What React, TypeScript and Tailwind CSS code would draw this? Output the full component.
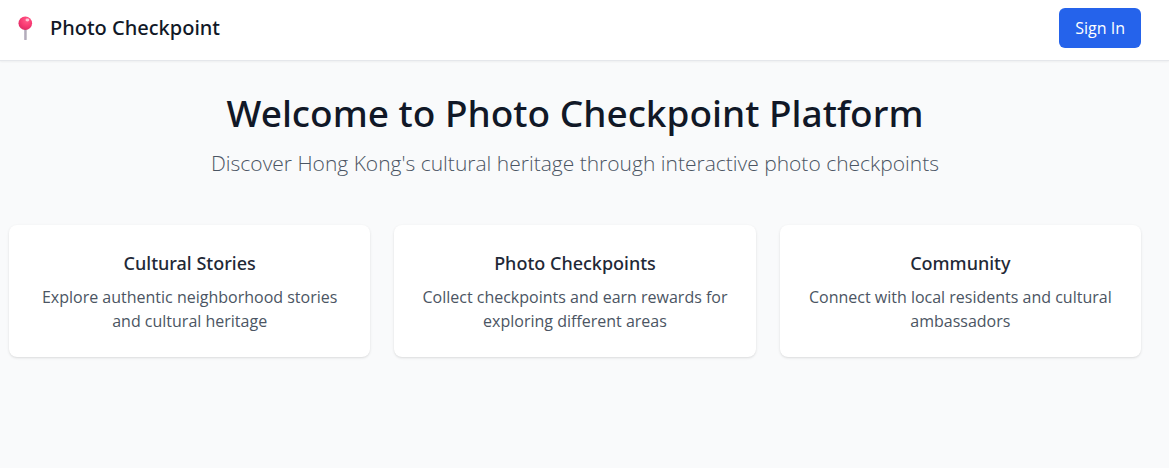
const features = [
  {
    title: "Cultural Stories",
    description:
      "Explore authentic neighborhood stories and cultural heritage",
  },
  {
    title: "Photo Checkpoints",
    description:
      "Collect checkpoints and earn rewards for exploring different areas",
  },
  {
    title: "Community",
    description: "Connect with local residents and cultural ambassadors",
  },
];

function PinIcon() {
  return (
    <svg width="16" height="26" viewBox="0 0 16 26" aria-hidden="true">
      <defs>
        <radialGradient id="pin-head" cx="0.6" cy="0.3" r="0.7">
          <stop offset="0" stopColor="#ff5c8a" />
          <stop offset="0.55" stopColor="#fa3c74" />
          <stop offset="1" stopColor="#e02c66" />
        </radialGradient>
        <linearGradient id="pin-needle" x1="0" x2="1" y1="0" y2="0">
          <stop offset="0" stopColor="#c9c3d0" />
          <stop offset="1" stopColor="#a39cac" />
        </linearGradient>
      </defs>
      <rect x="7" y="12" width="2.6" height="13" rx="0.6" fill="url(#pin-needle)" />
      <circle cx="8.3" cy="8.2" r="6.8" fill="url(#pin-head)" />
      <ellipse cx="10.4" cy="5" rx="1.9" ry="1.4" fill="#ffc4d6" />
    </svg>
  );
}

export default function App() {
  return (
    <div className="min-h-screen bg-[#f9fafb] font-['Noto_Sans',sans-serif]">
      {/* HEADER */}
      <header className="flex items-center justify-between border-b border-[#e5e7eb] bg-white pt-2 pr-7 pb-3 pl-[17px] shadow-[0_1px_2px_rgba(0,0,0,0.05)]">
        <div className="flex items-center gap-[17px]">
          <PinIcon />
          <span className="text-xl font-medium text-[#111827]">
            Photo Checkpoint
          </span>
        </div>
        <button className="h-10 cursor-pointer rounded-md bg-[#2563eb] px-4 font-['Open_Sans',sans-serif] text-base text-white">
          Sign In
        </button>
      </header>

      <main className="pt-8 pr-7 pl-[9px]">
        {/* HERO */}
        <div className="mb-12 text-center">
          <h1 className="mb-4 text-[37px] leading-10 font-medium text-[#111827]">
            Welcome to Photo Checkpoint Platform
          </h1>
          <p className="font-['Open_Sans',sans-serif] text-[21px] leading-7 font-light text-[#4b5563]">
            Discover Hong Kong's cultural heritage through interactive photo
            checkpoints
          </p>
        </div>

        {/* FEATURES */}
        <div className="grid gap-6 md:grid-cols-3">
          {features.map((f) => (
            <div
              key={f.title}
              className="rounded-lg bg-white p-6 text-center shadow-sm"
            >
              <h3 className="mb-2 text-lg font-medium text-[#1f2937]">
                {f.title}
              </h3>
              <p className="font-['Open_Sans',sans-serif] text-[#4b5563]">
                {f.description}
              </p>
            </div>
          ))}
        </div>
      </main>
    </div>
  );
}
